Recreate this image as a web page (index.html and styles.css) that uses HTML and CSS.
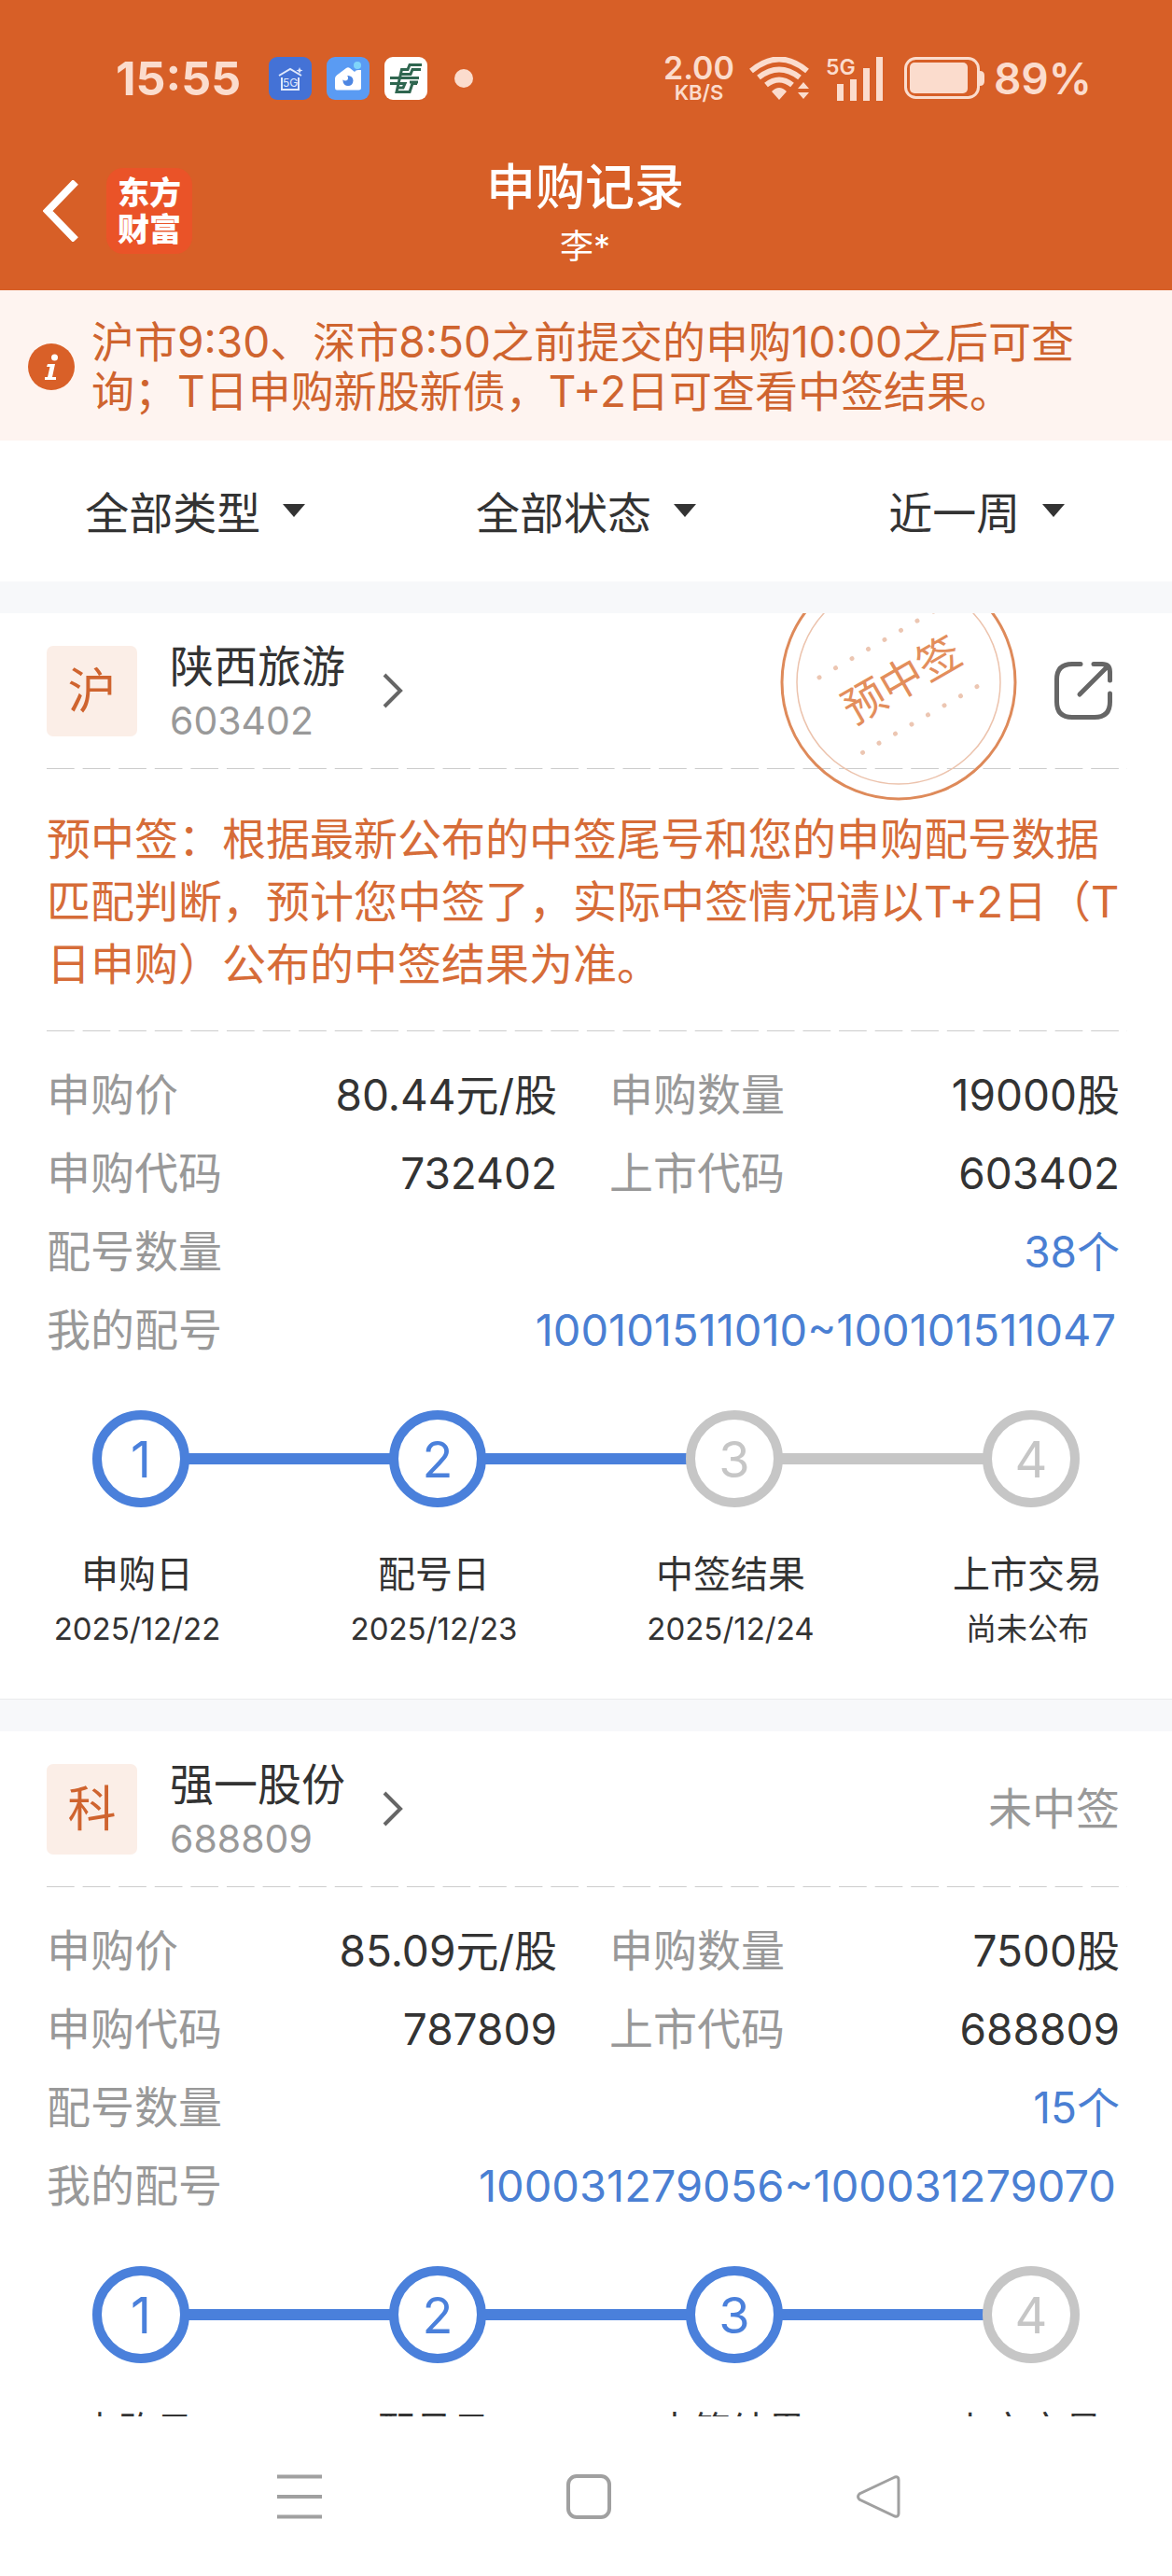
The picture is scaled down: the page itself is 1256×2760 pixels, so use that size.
FILE: index.html
```html
<!DOCTYPE html>
<html lang="zh-CN">
<head>
<meta charset="utf-8">
<meta name="viewport" content="width=device-width, initial-scale=1">
<title>申购记录</title>
<link rel="stylesheet" href="styles.css">
</head>
<body>
<div class="status-bar">
  <div class="status-left">
    <span class="clock">15:55</span>
    <svg class="app-icon" viewBox="0 0 46 46" aria-hidden="true">
      <rect width="46" height="46" rx="9" fill="#4472d6"/>
      <path d="M11 20 L23 13 L35 20 M14 22 V35 H32 V22" fill="none" stroke="#dfe8fb" stroke-width="2"/>
      <path d="M33 11 l1 2.500 2.500 1 -2.500 1 -1 2.500 -1 -2.500 -2.500 -1 2.500 -1z" fill="#dfe8fb"/>
      <text x="23" y="32" font-size="12" text-anchor="middle" fill="#dfe8fb">5G</text>
    </svg>
    <svg class="app-icon" viewBox="0 0 46 46" aria-hidden="true">
      <rect width="46" height="46" rx="9" fill="#5a9bf3"/>
      <circle cx="33" cy="9" r="4" fill="#7fd4fa"/>
      <path d="M9 23 Q9 21 11 19.500 L21 12 Q23 10.500 25 12 L30 16 Q31 14 34 14 H37 V33 Q37 35.500 34.500 35.500 H11 Q9 35.500 9 33z" fill="#fff"/>
      <circle cx="23" cy="25.500" r="5.500" fill="#4d86e2"/>
      <circle cx="20" cy="22.500" r="3" fill="#fff"/>
    </svg>
    <svg class="app-icon" viewBox="0 0 46 46" aria-hidden="true">
      <rect width="46" height="46" rx="9" fill="#fff"/>
      <g fill="none" stroke="#2f6650" stroke-width="3">
        <path d="M40 8.500 H27 L25 13.500 H18.500 L13 37.500 H27 L30 28.500 H35"/>
        <path d="M39 13.500 H30 L28 18.500 H18 M6 22.500 H37 M6 28.500 H22 L20 33 H14 M36 27 H27"/>
      </g>
    </svg>
    <i class="more-dot"></i>
  </div>
  <div class="status-right">
    <span class="speed"><b>2.00</b><small>KB/S</small></span>
    <svg class="wifi" viewBox="0 0 66 46" aria-hidden="true">
      <g fill="none" stroke="#fbdccd" stroke-width="6">
        <path d="M2 15 Q32 -10 62 15"/>
        <path d="M10 22 Q32 5 54 22"/>
        <path d="M18 30 Q32 19 46 30"/>
      </g>
      <path d="M24 37 Q32 29 40 37 L32 46z M52 34 L58 27 64 34z M52 38 H64 L58 45z" fill="#fbdccd"/>
    </svg>
    <svg class="signal" viewBox="0 0 62 48" aria-hidden="true">
      <text x="0" y="20" font-size="23" font-weight="600" fill="#fbdccd">5G</text>
      <path d="M12 30h7v18h-7z M26 25h7v23h-7z M40 13h7v35h-7z M54 1h7v47h-7z" fill="#fbdccd"/>
    </svg>
    <svg class="battery" viewBox="0 0 86 46" aria-hidden="true">
      <rect x="1.500" y="1.500" width="78" height="42" rx="11" fill="none" stroke="#fbdccd" stroke-width="3"/>
      <rect x="6" y="6" width="62" height="33" rx="5" fill="#fbdccd"/>
      <path d="M81 15 Q86 15 86 20 V26 Q86 31 81 31z" fill="#fbdccd"/>
    </svg>
    <span class="percent">89%</span>
  </div>
</div>

<header class="app-header">
  <div class="header-left">
    <button class="back" aria-label="返回">
      <svg viewBox="0 0 38 66" aria-hidden="true"><path d="M35 2 L5 33 L35 64" fill="none" stroke="#fff" stroke-width="8"/></svg>
    </button>
    <span class="logo">东方<br>财富</span>
  </div>
  <div class="heading">
    <h1>申购记录</h1>
    <p>李*</p>
  </div>
</header>

<div class="notice">
  <svg class="info" viewBox="0 0 50 50" aria-hidden="true">
    <circle cx="25" cy="25" r="25" fill="#d96028"/>
    <circle cx="28.500" cy="15" r="3.500" fill="#fff"/>
    <path d="M21 22 H29 L26 36 H30 V39 H18 V36 H21 L23.500 25 H20z" fill="#fff"/>
  </svg>
  <p>沪市9:30、深市8:50之前提交的申购10:00之后可查询；T日申购新股新债，T+2日可查看中签结果。</p>
</div>

<form class="filters">
  <label class="filter">
    <select aria-label="类型"><option>全部类型</option></select>
    <svg class="caret" viewBox="0 0 24 14" aria-hidden="true"><path d="M0 0h24L12 14z" fill="#333"/></svg>
  </label>
  <label class="filter">
    <select aria-label="状态"><option>全部状态</option></select>
    <svg class="caret" viewBox="0 0 24 14" aria-hidden="true"><path d="M0 0h24L12 14z" fill="#333"/></svg>
  </label>
  <label class="filter">
    <select aria-label="时间"><option>近一周</option></select>
    <svg class="caret" viewBox="0 0 24 14" aria-hidden="true"><path d="M0 0h24L12 14z" fill="#333"/></svg>
  </label>
</form>

<main class="records">
  <article class="card">
    <div class="card-head">
      <span class="market">沪</span>
      <a class="stock" href="#603402">
        <span class="stock-text"><span class="name">陕西旅游</span><span class="code">603402</span></span>
        <svg class="chevron" viewBox="0 0 22 38" aria-hidden="true"><path d="M2 2 L19 19 L2 36" fill="none" stroke="#666" stroke-width="4"/></svg>
      </a>
      <button class="share" aria-label="分享">
        <svg viewBox="0 0 62 62" aria-hidden="true"><path d="M28 2.500 H19 Q2.500 2.500 2.500 19 V43 Q2.500 59.500 19 59.500 H43 Q59.500 59.500 59.500 43 V34 M42 2.500 H51 Q59.500 2.500 59.500 11 V20 M27 35 L57 5" fill="none" stroke="#666" stroke-width="5" stroke-linecap="round"/></svg>
      </button>
    </div>
    <svg class="stamp" viewBox="0 0 254 254" aria-label="预中签">
      <circle cx="127" cy="127" r="125" fill="none" stroke="#de8a5a" stroke-width="3"/>
      <circle cx="127" cy="127" r="109" fill="none" stroke="#ecc3ad" stroke-width="1.500"/>
      <g transform="rotate(-30 127 127)">
        <path d="M56 80 H198 M56 173 H198" fill="none" stroke="#ecc6b2" stroke-width="5" stroke-linecap="round" stroke-dasharray="0 20.200"/>
        <text x="131" y="143" font-size="46" text-anchor="middle" fill="#e38e5c">预中签</text>
      </g>
    </svg>
    <hr class="rule">
    <p class="message">预中签：根据最新公布的中签尾号和您的申购配号数据匹配判断，预计您中签了，实际中签情况请以T+2日（T日申购）公布的中签结果为准。</p>
    <hr class="rule">
    <dl class="facts">
      <div><dt>申购价</dt><dd>80.44元/股</dd></div>
      <div><dt>申购数量</dt><dd>19000股</dd></div>
      <div><dt>申购代码</dt><dd>732402</dd></div>
      <div><dt>上市代码</dt><dd>603402</dd></div>
      <div class="wide"><dt>配号数量</dt><dd><a href="#lots-603402">38个</a></dd></div>
      <div class="wide"><dt>我的配号</dt><dd><a class="lots" href="#lots-603402">100101511010~100101511047</a></dd></div>
    </dl>
    <ol class="steps">
      <li class="done"><span class="num">1</span><span class="label">申购日</span><span class="date">2025/12/22</span></li>
      <li class="done"><span class="num">2</span><span class="label">配号日</span><span class="date">2025/12/23</span></li>
      <li><span class="num">3</span><span class="label">中签结果</span><span class="date">2025/12/24</span></li>
      <li><span class="num">4</span><span class="label">上市交易</span><span class="date">尚未公布</span></li>
    </ol>
  </article>

  <article class="card">
    <div class="card-head">
      <span class="market">科</span>
      <a class="stock" href="#688809">
        <span class="stock-text"><span class="name">强一股份</span><span class="code">688809</span></span>
        <svg class="chevron" viewBox="0 0 22 38" aria-hidden="true"><path d="M2 2 L19 19 L2 36" fill="none" stroke="#666" stroke-width="4"/></svg>
      </a>
      <span class="state">未中签</span>
    </div>
    <hr class="rule">
    <dl class="facts">
      <div><dt>申购价</dt><dd>85.09元/股</dd></div>
      <div><dt>申购数量</dt><dd>7500股</dd></div>
      <div><dt>申购代码</dt><dd>787809</dd></div>
      <div><dt>上市代码</dt><dd>688809</dd></div>
      <div class="wide"><dt>配号数量</dt><dd><a href="#lots-688809">15个</a></dd></div>
      <div class="wide"><dt>我的配号</dt><dd><a class="lots" href="#lots-688809">100031279056~100031279070</a></dd></div>
    </dl>
    <ol class="steps">
      <li class="done"><span class="num">1</span><span class="label">申购日</span></li>
      <li class="done"><span class="num">2</span><span class="label">配号日</span></li>
      <li class="done"><span class="num">3</span><span class="label">中签结果</span></li>
      <li><span class="num">4</span><span class="label">上市交易</span></li>
    </ol>
  </article>
</main>

<nav class="system-nav">
  <button aria-label="最近任务"><svg viewBox="0 0 48 48" aria-hidden="true"><path d="M0 2.500h48M0 24h48M0 45.500h48" fill="none" stroke="#a0a0a0" stroke-width="4"/></svg></button>
  <button aria-label="主页"><svg viewBox="0 0 48 48" aria-hidden="true"><rect x="2" y="2" width="44" height="44" rx="9" fill="none" stroke="#a0a0a0" stroke-width="4"/></svg></button>
  <button aria-label="返回上一页"><svg viewBox="0 0 48 48" aria-hidden="true"><path d="M42 3 L4 21 Q1 24 4 27 L42 45 Q46 46 46 42 V6 Q46 2 42 3z" fill="none" stroke="#a0a0a0" stroke-width="3"/></svg></button>
</nav>
</body>
</html>
```
FILE: styles.css
```css
* {
  box-sizing: border-box;
}

body {
  margin: 0;
  height: 100vh;
  display: flex;
  flex-direction: column;
  background: #fff;
  color: #333;
  font-family: Inter, "Noto Sans CJK SC", sans-serif;
  font-size: 47px;
}

h1, p, dl, dd, ol {
  margin: 0;
  padding: 0;
}

ol {
  list-style: none;
}

button {
  padding: 0;
  border: 0;
  background: none;
  font: inherit;
}

svg {
  display: block;
  flex: none;
}

a {
  color: #4a7fd3;
  text-decoration: none;
}

/* Status bar */
.status-bar {
  display: flex;
  justify-content: space-between;
  align-items: center;
  height: 168px;
  padding: 0 86px 0 124px;
  background: #d75f27;
  color: #fbdccd;
}

.status-left,
.status-right {
  display: flex;
  align-items: center;
}

.status-left {
  gap: 16px;
}

.clock {
  margin-right: 14px;
  font-size: 50px;
  font-weight: 700;
  line-height: 60px;
}

.app-icon {
  width: 46px;
  height: 46px;
}

.more-dot {
  width: 20px;
  height: 20px;
  margin-left: 13px;
  border-radius: 50%;
  background: #fbdccd;
}

.status-right {
  gap: 16px;
}

.speed {
  display: flex;
  flex-direction: column;
  align-items: center;
  font-size: 34px;
  line-height: 30px;
}

.speed b {
  font-weight: 600;
}

.speed small {
  font-size: 22px;
  font-weight: 600;
  line-height: 22px;
}

.wifi {
  width: 66px;
  height: 46px;
}

.signal {
  width: 62px;
  height: 48px;
}

.battery {
  width: 86px;
  height: 46px;
  margin-left: 6px;
}

.percent {
  margin-left: -6px;
  font-size: 46px;
  font-weight: 600;
  line-height: 60px;
}

/* Header */
.app-header {
  display: grid;
  grid-template-columns: 1fr auto 1fr;
  height: 143px;
  padding: 0 48px 0 46px;
  background: #d75f27;
  color: #fff;
}

.header-left {
  display: flex;
  align-items: center;
  gap: 30px;
  height: 115px;
}

.back svg {
  width: 38px;
  height: 66px;
}

.logo {
  width: 92px;
  height: 92px;
  padding-top: 7px;
  border-radius: 18px;
  background: #ea5328;
  font-size: 34px;
  font-weight: 900;
  line-height: 39px;
  text-align: center;
}

.heading {
  text-align: center;
}

.heading h1 {
  font-size: 53px;
  font-weight: 500;
  line-height: 66px;
}

.heading p {
  font-size: 36px;
  line-height: 60px;
}

/* Notice */
.notice {
  display: flex;
  align-items: center;
  gap: 18px;
  padding: 29px 64px 26px 30px;
  background: #fef4f0;
  color: #cf642f;
  font-size: 46px;
  line-height: 53px;
}

.info {
  width: 50px;
  height: 50px;
}

/* Filters */
.filters {
  display: grid;
  grid-template-columns: repeat(3, 1fr);
  justify-items: center;
  align-items: center;
  height: 151px;
  background: #fff;
}

.filter {
  position: relative;
}

.filter select {
  display: block;
  appearance: none;
  padding: 4px 48px 0 0;
  border: 0;
  background: none;
  color: #333;
  font: inherit;
}

.caret {
  position: absolute;
  top: 50%;
  right: 0;
  width: 24px;
  height: 14px;
  margin-top: -8px;
  pointer-events: none;
}

/* Records */
.records {
  flex: 1;
  min-height: 0;
  overflow-y: auto;
  scrollbar-width: none;
  background: #f7f8fa;
}

.card {
  position: relative;
  margin-top: 34px;
  padding: 0 48px 46px 50px;
  overflow: hidden;
  border-bottom: 1px solid #e9eaec;
  background: #fff;
}

.card-head {
  display: flex;
  align-items: center;
  height: 166px;
  padding: 0 8px 0 0;
}

.market {
  width: 97px;
  height: 97px;
  border-radius: 7px;
  background: #fbeee7;
  color: #cf642f;
  font-size: 52px;
  line-height: 97px;
  text-align: center;
}

.stock {
  display: flex;
  align-items: center;
  gap: 40px;
  margin-left: 35px;
  color: #333;
}

.stock-text {
  display: flex;
  flex-direction: column;
  padding-top: 6px;
}

.name {
  line-height: 58px;
}

.code {
  color: #999;
  font-size: 41px;
  line-height: 58px;
}

.chevron {
  width: 22px;
  height: 38px;
}

.share {
  margin-left: auto;
  margin-right: 8px;
}

.share svg {
  width: 62px;
  height: 62px;
}

.state {
  margin-left: auto;
  color: #999;
  line-height: 58px;
}

.stamp {
  position: absolute;
  top: -53px;
  right: 166px;
  width: 254px;
  height: 254px;
}

.rule {
  height: 2px;
  margin: 0;
  border: 0;
  background: linear-gradient(90deg, #ccc 78%, transparent 78%) 0 0 / 39px 1px;
  background-repeat: round no-repeat;
}

.message {
  padding: 40px 0 38px;
  color: #d66c38;
  line-height: 67px;
}

.facts {
  display: grid;
  grid-template-columns: 1fr 1fr;
  column-gap: 56px;
  padding: 25px 8px 0 0;
}

.facts div {
  display: flex;
  justify-content: space-between;
  line-height: 84px;
}

.facts .wide {
  grid-column: 1 / -1;
}

.facts dt {
  color: #999;
}

.facts dd {
  font-size: 46px;
}

.facts .lots {
  padding-right: 4px;
  font-size: 47px;
}

/* Progress steps */
.steps {
  display: grid;
  grid-template-columns: repeat(4, 1fr);
  margin: 44px -56px 0 -58px;
}

.steps li {
  position: relative;
  display: flex;
  flex-direction: column;
  align-items: center;
  color: #c6c6c6;
}

.steps li:not(:last-child)::after {
  content: "";
  position: absolute;
  top: 46px;
  left: calc(50% + 50px);
  width: calc(100% - 100px);
  height: 12px;
  background: #c6c6c6;
}

.steps .done {
  color: #4a80db;
}

.steps .done:not(:last-child)::after {
  background: #4a80db;
}

.num {
  width: 104px;
  height: 104px;
  border: 10px solid currentColor;
  border-radius: 50%;
  font-size: 54px;
  line-height: 86px;
  text-align: center;
}

.label {
  margin-top: 43px;
  padding-right: 8px;
  color: #333;
  font-size: 40px;
  line-height: 58px;
}

.date {
  padding-right: 8px;
  color: #333;
  font-size: 33px;
  line-height: 58px;
}

/* System navigation */
.system-nav {
  display: flex;
  justify-content: space-between;
  padding: 62px 291px 61px 297px;
  background: #fff;
}

.system-nav svg {
  width: 48px;
  height: 48px;
}
```
